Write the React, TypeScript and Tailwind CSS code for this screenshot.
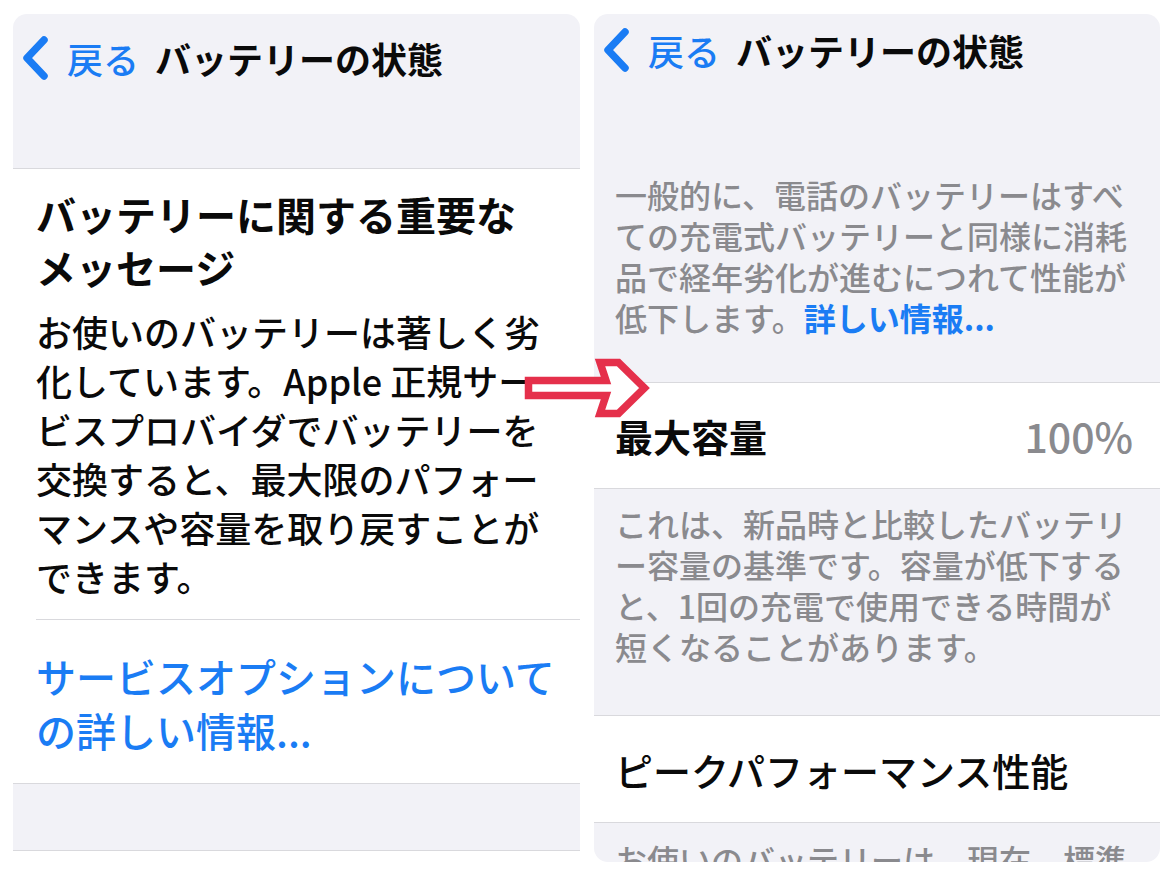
import React from "react";

const blue = "text-[#1a7cf4]";

function Chevron() {
  return (
    <svg width="28" height="44" viewBox="0 0 28 44" className="shrink-0 -ml-[1px]">
      <path
        d="M23 4 L6 22 L23 40"
        fill="none"
        stroke="#1a7cf4"
        strokeWidth="7.5"
        strokeLinecap="round"
        strokeLinejoin="round"
      />
    </svg>
  );
}

function NavBar({ className = "" }: { className?: string }) {
  return (
    <div className={`flex items-center h-[44px] pl-[9px] ${className}`}>
      <Chevron />
      <span className={`ml-[18px] text-[36px] leading-[40px] font-medium ${blue}`}>戻る</span>
      <span className="ml-[16px] text-[36px] leading-[40px] font-bold text-[#0a0a0a]">
        バッテリーの状態
      </span>
    </div>
  );
}

function LeftPanel() {
  return (
    <div className="w-[567px] shrink-0 rounded-t-[14px] overflow-hidden">
      <div className="h-[155px] bg-[#f2f2f7] border-b border-[#d9d9dd] pt-[22px]">
        <NavBar />
      </div>
      <div className="bg-white">
        <div className="pl-[23px] pt-[19px]">
          <h2 className="text-[40px] leading-[53px] font-bold text-[#0a0a0a]">
            バッテリーに関する重要な
            <br />
            メッセージ
          </h2>
          <p className="mt-[13px] text-[36px] leading-[49px] font-medium text-[#0a0a0a]">
            お使いのバッテリーは著しく劣
            <br />
            化しています。Apple 正規サー
            <br />
            ビスプロバイダでバッテリーを
            <br />
            交換すると、最大限のパフォー
            <br />
            マンスや容量を取り戻すことが
            <br />
            できます。
          </p>
        </div>
        <div className="ml-[23px] mt-[18px] border-t border-[#d9d9dd] pt-[29px] pb-[26px]">
          <p className={`text-[40px] leading-[54px] font-medium ${blue}`}>
            サービスオプションについて
            <br />
            の詳しい情報...
          </p>
        </div>
      </div>
      <div className="h-[68px] bg-[#f2f2f7] border-y border-[#d9d9dd]" />
    </div>
  );
}

function RightPanel() {
  return (
    <div className="w-[566px] h-[848px] shrink-0 rounded-[14px] overflow-hidden bg-[#f2f2f7]">
      <div className="h-[369px] border-b border-[#d9d9dd] pt-[14px]">
        <NavBar />
        <p className="mt-[102px] pl-[21px] text-[32px] leading-[41px] font-medium text-[#8a8a8e]">
          一般的に、電話のバッテリーはすべ
          <br />
          ての充電式バッテリーと同様に消耗
          <br />
          品で経年劣化が進むにつれて性能が
          <br />
          低下します。<span className={`font-bold ${blue}`}>詳しい情報...</span>
        </p>
      </div>
      <div className="h-[106px] bg-white border-b border-[#d9d9dd] flex items-center justify-between pl-[21px] pr-[27px]">
        <span className="text-[38px] font-bold text-[#0a0a0a]">最大容量</span>
        <span className="text-[41px] font-medium text-[#8a8a8e]">100%</span>
      </div>
      <div className="h-[227px] border-b border-[#d9d9dd] pt-[14px]">
        <p className="pl-[21px] text-[32px] leading-[41px] font-medium text-[#8a8a8e]">
          これは、新品時と比較したバッテリ
          <br />
          ー容量の基準です。容量が低下する
          <br />
          と、1回の充電で使用できる時間が
          <br />
          短くなることがあります。
        </p>
      </div>
      <div className="h-[107px] bg-white border-b border-[#d9d9dd] flex items-center pl-[21px]">
        <span className="text-[38px] font-medium text-[#0a0a0a]">
          ピークパフォーマンス性能
        </span>
      </div>
      <p className="pt-[16px] pl-[21px] text-[32px] leading-[41px] font-medium text-[#8a8a8e]">
        お使いのバッテリーは、現在、標準
      </p>
    </div>
  );
}

function Arrow() {
  return (
    <svg
      width="135"
      height="66"
      viewBox="0 0 135 66"
      className="absolute left-[520px] top-[355px]"
    >
      <path
        d="M8.5 25.5 L86 25.5 L80 7.5 L98.5 7.5 L124.5 33 L98.5 58.5 L80 58.5 L86 40.5 L8.5 40.5 Z"
        fill="white"
        stroke="#e5304b"
        strokeWidth="7.5"
        strokeLinejoin="miter"
      />
    </svg>
  );
}

export default function App() {
  return (
    <div className="relative w-[1174px] h-[880px] overflow-hidden bg-white font-['Noto_Sans_CJK_JP','Noto_Sans',sans-serif] flex items-start gap-[14px] pt-[14px] pl-[13px]">
      <LeftPanel />
      <RightPanel />
      <Arrow />
    </div>
  );
}
